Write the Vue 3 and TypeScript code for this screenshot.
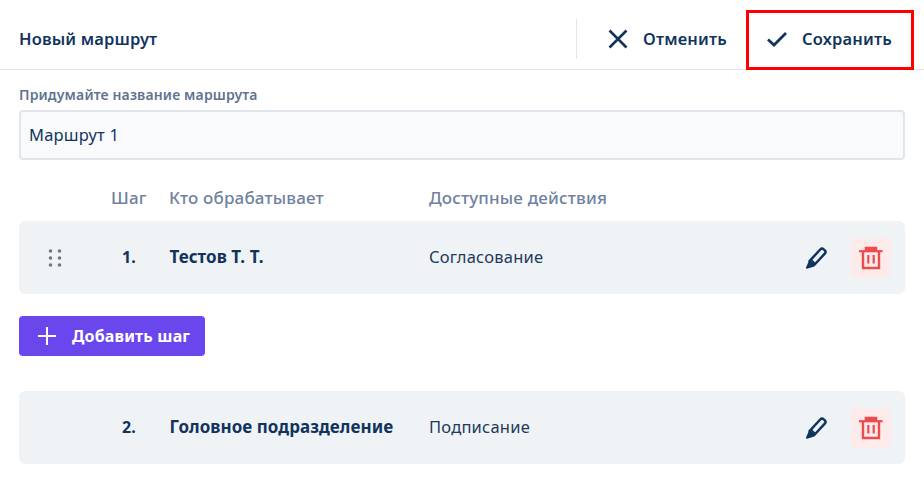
<script setup lang="ts">
interface Step { n: string; who: string; action: string; drag: boolean }
const first: Step = { n: '1.', who: 'Тестов Т. Т.', action: 'Согласование', drag: true }
const second: Step = { n: '2.', who: 'Головное подразделение', action: 'Подписание', drag: false }
const steps: Step[] = [first, second]
</script>

<template>
  <div class="page">
    <header class="header">
      <div class="title">Новый маршрут</div>
      <div class="divider"></div>
      <button class="hbtn cancel">
        <svg width="20" height="20" viewBox="0 0 20 20" fill="none" stroke="#12345c" stroke-width="2.6"><path d="M1.500 1.500 18.500 18.500M18.500 1.500 1.500 18.500" /></svg>
        <span>Отменить</span>
      </button>
      <button class="hbtn save">
        <svg width="20" height="16" viewBox="0 0 20 16" fill="none" stroke="#12345c" stroke-width="2.800"><path d="M1 8.500 7 14 19 2" /></svg>
        <span>Сохранить</span>
      </button>
    </header>

    <section class="form">
      <label class="label">Придумайте название маршрута</label>
      <div class="input"><span>Маршрут 1</span></div>

      <div class="cols">
        <div class="c-step">Шаг</div>
        <div class="c-who">Кто обрабатывает</div>
        <div class="c-act">Доступные действия</div>
      </div>

      <template v-for="s in steps" :key="s.n">
        <div class="row">
          <div class="c-drag">
            <svg v-if="s.drag" width="14" height="20" viewBox="0 0 14 20" fill="#6f7780">
              <circle cx="2.500" cy="3" r="1.800" /><circle cx="11.500" cy="3" r="1.800" />
              <circle cx="2.500" cy="10" r="1.800" /><circle cx="11.500" cy="10" r="1.800" />
              <circle cx="2.500" cy="17" r="1.800" /><circle cx="11.500" cy="17" r="1.800" />
            </svg>
          </div>
          <div class="r-n">{{ s.n }}</div>
          <div class="r-who">{{ s.who }}</div>
          <div class="r-act">{{ s.action }}</div>
          <svg class="pen" width="22" height="22" viewBox="1.500 1 19.500 19.500" fill="none" stroke="#0f3460" stroke-width="2.200" stroke-linejoin="round">
            <path d="M5.500 13.500 15 3.200a2.200 2.200 0 0 1 3.100-.1l.8.7a2.200 2.200 0 0 1 .1 3.100L9.500 17.200Z" />
            <path d="M5.200 14.500 3 19.500 8.800 17.800Z" fill="#0f3460" stroke-width="1.400" />
            <path d="M7 12.500 10.500 15.700" stroke-width="1.600" />
          </svg>
          <div class="trash">
            <svg width="24" height="24" viewBox="0 0 24 24" fill="none" stroke="#ee4b4f" stroke-width="2.400">
              <path d="M0 5.200H23.500" stroke-width="2.200" />
              <path d="M6.500 4.500V1.500H17.500V4.500Z" fill="#ee4b4f" stroke-width="1.600" />
              <path d="M4 5.500V22H20V5.500" />
              <path d="M9.300 9V17.500M14.700 9V17.500" stroke-width="2.200" />
            </svg>
          </div>
        </div>
        <button v-if="s.drag" class="add">
          <svg width="18" height="18" viewBox="0 0 18 18" fill="none" stroke="#fff" stroke-width="2"><path d="M9 0V18M0 9H18" /></svg>
          <span>Добавить шаг</span>
        </button>
      </template>
    </section>
  </div>
</template>

<style>
html, body { margin: 0; background: #fff; }
</style>

<style scoped>
.page {
  width: 924px;
  height: 478px;
  overflow: hidden;
  font-family: "Noto Sans", sans-serif;
  color: #12345c;
  box-sizing: border-box;
}
.header {
  height: 70px;
  box-sizing: border-box;
  border-bottom: 1px solid #e1e4ea;
  display: flex;
  align-items: center;
  padding: 9px 0 0 19px;
}
.title { font-size: 16.5px; letter-spacing: 0.15px; font-weight: 600; flex: 1; padding-bottom: 2px; }
.divider { width: 1px; height: 40px; background: #e1e4ea; }
.hbtn {
  display: flex;
  align-items: center;
  background: none;
  border: 0;
  padding: 0;
  font: 600 16.5px "Noto Sans", sans-serif;
  letter-spacing: 0.18px;
  color: #12345c;
}
.hbtn span { padding-bottom: 2px; }
.cancel { margin-left: 31px; margin-right: 19px; gap: 15px; }
.save {
  width: 168px;
  height: 60px;
  box-sizing: border-box;
  border: 3px solid #f00;
  margin-right: 10px;
  padding: 0 0 2px 18px;
  gap: 15px;
  margin-top: 2px;
}
.form { padding: 0 19px; }
.label {
  display: block;
  margin-top: 16px;
  font-size: 14px;
  letter-spacing: 0.15px;
  line-height: 18px;
  font-weight: 600;
  color: #5f7391;
}
.input {
  margin-top: 6px;
  height: 50px;
  box-sizing: border-box;
  background: #f8fafc;
  border: 2px solid #e1e6ed;
  border-radius: 4px;
  padding-left: 8px;
  display: flex;
  align-items: center;
  font-size: 16.5px;
  letter-spacing: 0.2px;
}
.input span { padding-bottom: 2px; }
.cols {
  display: flex;
  align-items: center;
  height: 22px;
  box-sizing: border-box;
  padding-bottom: 2px;
  margin-top: 27px;
  font-size: 17px;
  letter-spacing: 0.17px;
  font-weight: 500;
  color: #6f82a0;
}
.c-step { width: 150px; padding-left: 92px; box-sizing: border-box; }
.c-who { width: 260px; }
.row {
  display: flex;
  align-items: center;
  height: 73px;
  margin-top: 12px;
  box-sizing: border-box;
  background: #eff3f6;
  border-radius: 6px;
  font-size: 17px;
}
.add + .row { margin-top: 35px; }
.c-drag { padding-left: 29px; width: 14px; display: flex; }
.r-n { width: 48px; padding: 0 0 2px 60px; font-size: 16px; font-weight: 700; }
.r-who { width: 260px; padding-bottom: 2px; font-weight: 700; letter-spacing: 0.05px; margin-left: -0.5px; }
.r-act { flex: 1; padding-bottom: 2px; font-size: 16.5px; letter-spacing: 0.22px; color: #1f3a5c; margin-left: -0.5px; }
.pen { margin-right: 24px; }
.trash {
  width: 40px;
  height: 40px;
  margin-right: 14px;
  border-radius: 5px;
  background: #fdeaea;
  display: flex;
  align-items: center;
  justify-content: center;
}
.add {
  display: flex;
  align-items: center;
  gap: 16px;
  margin-top: 22px;
  width: 186px;
  height: 40px;
  box-sizing: border-box;
  padding: 0 0 0 19px;
  background: #6a47ec;
  border: 0;
  border-radius: 4px;
  color: #fff;
  font: 700 16px "Noto Sans", sans-serif;
  letter-spacing: 0.15px;
}
</style>
